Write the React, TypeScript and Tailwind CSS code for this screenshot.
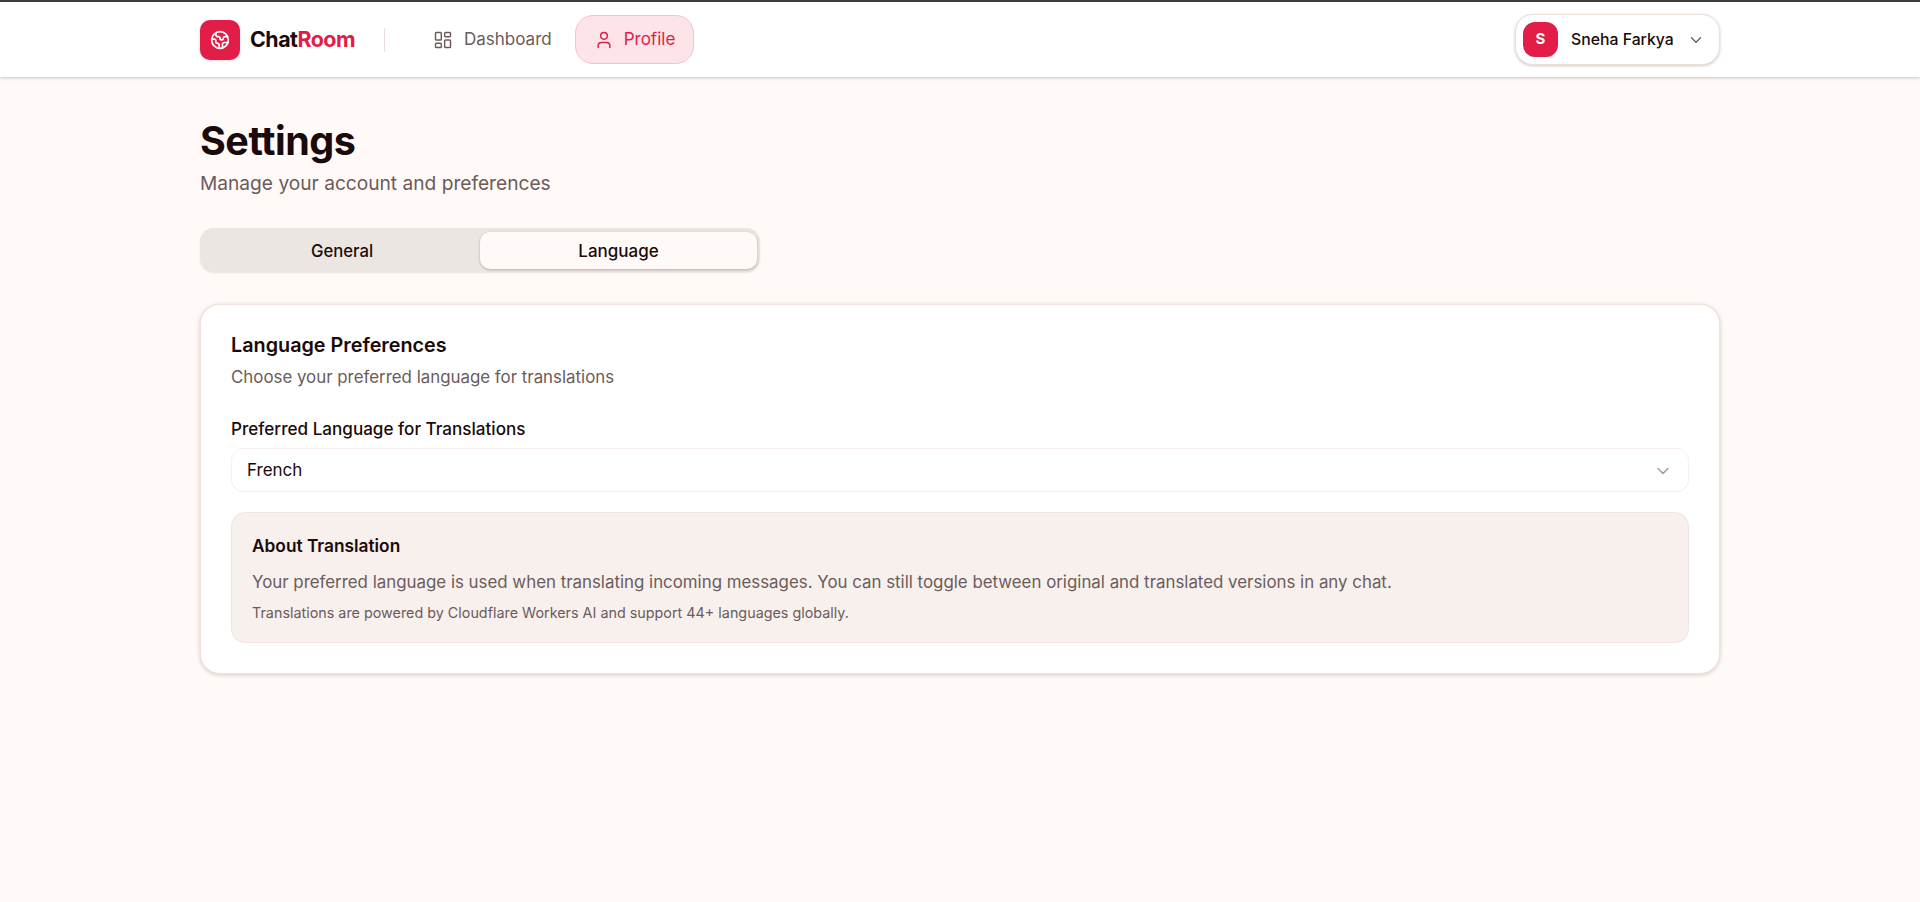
import { ChevronDown, Earth, LayoutDashboard, User } from "lucide-react";

export default function App() {
  return (
    <div className="min-h-screen bg-[#fff9f7] font-['Inter',sans-serif] text-[#1a0a0a]">
      <header className="h-[77px] border-t-2 border-[#3c3c3c] bg-white shadow-[0_1px_3px_rgba(60,30,30,0.25)]">
        <div className="mx-[200px] flex h-full items-center">
          <div className="flex items-center gap-[10px]">
            <div className="flex h-10 w-10 items-center justify-center rounded-[10px] bg-[#e11d48] shadow-sm">
              <Earth className="h-5 w-5 text-white" strokeWidth={2} />
            </div>
            <span className="text-[21.4px] font-bold tracking-[-0.5px]">
              Chat<span className="text-[#e11d48]">Room</span>
            </span>
          </div>
          <div className="ml-[29px] h-6 w-px bg-[#e8ddd8]" />
          <nav className="ml-[30px] flex items-center gap-[5px]">
            <div className="flex h-12 items-center gap-[11px] px-[18px] text-[17px] font-normal text-[#6b5b5b]">
              <LayoutDashboard className="h-5 w-5" strokeWidth={1.75} />
              Dashboard
            </div>
            <div className="flex h-[49px] items-center gap-[10px] rounded-[18px] border border-[#f9c0cc] bg-[#fce4e8] px-[18px] text-[17px] font-normal text-[#e11d48]">
              <User className="h-5 w-5" strokeWidth={1.75} />
              Profile
            </div>
          </nav>
          <div className="ml-auto flex h-[51px] w-[205px] items-center rounded-[18px] border border-[#ecdfd8] bg-white pl-[7px] shadow-[0_1px_3px_rgba(80,40,30,0.25)]">
            <div className="flex h-[35px] w-[35px] items-center justify-center rounded-[12px] bg-[#e11d48] text-[15px] font-bold text-white">
              S
            </div>
            <span className="ml-[13px] text-[15.8px] font-medium">Sneha Farkya</span>
            <ChevronDown className="ml-[13px] h-[18px] w-[18px] text-[#6b5b5b]" strokeWidth={1.75} />
          </div>
        </div>
      </header>

      <main className="mx-[200px] pt-[40px]">
        <h1 className="text-[39.5px] leading-[48px] font-bold tracking-[-0.5px]">Settings</h1>
        <p className="mt-[4px] text-[19.15px] leading-[28px] text-[#6b5b5b]">Manage your account and preferences</p>

        <div className="mt-[31px] flex h-[44px] w-[560px] items-center rounded-[14px] bg-[#ece6e3] py-[4px] pr-[3px] pl-[4px] shadow-[0_1px_2px_rgba(80,40,30,0.1)]">
          <div className="mt-[3px] flex flex-1 items-center justify-center text-[16.7px] font-medium">General</div>
          <div className="mt-[1px] flex h-[37px] w-[277px] items-center justify-center rounded-[10px] bg-[#fff9f7] pt-[2px] text-[17px] font-medium shadow-[0_1px_3px_rgba(80,40,30,0.3)]">
            Language
          </div>
        </div>

        <section className="mt-[32px] rounded-[20px] border border-[#efe3de] bg-white px-[30px] pt-[26px] pb-[30px] shadow-[0_1px_4px_rgba(80,40,30,0.22)]">
          <h2 className="text-[19.8px] leading-[28px] font-semibold">Language Preferences</h2>
          <p className="mt-[6px] text-[16.88px] leading-[24px] text-[#6b5b5b]">Choose your preferred language for translations</p>
          <label className="mt-[28px] block text-[17.1px] leading-[24px] font-medium">Preferred Language for Translations</label>
          <div className="mt-[7px] flex h-[44px] items-center justify-between rounded-[12px] border border-[#f8efeb] bg-white px-[15px] pt-[1px] text-[17px]">
            French
            <ChevronDown className="h-5 w-5 text-[#a89a9a]" strokeWidth={1.75} />
          </div>
          <div className="mt-[20px] h-[131px] rounded-[14px] border border-[#efe5e1] bg-[#f8f0ed] px-[20px] pt-[21px]">
            <h3 className="text-[17.3px] leading-[24px] font-semibold">About Translation</h3>
            <p className="mt-[12px] text-[16.87px] leading-[24px] text-[#6b5b5b]">
              Your preferred language is used when translating incoming messages. You can still toggle between original and translated versions in any chat.
            </p>
            <p className="mt-[9px] text-[14.35px] leading-[20px] text-[#6b5b5b]">
              Translations are powered by Cloudflare Workers AI and support 44+ languages globally.
            </p>
          </div>
        </section>
      </main>
    </div>
  );
}
